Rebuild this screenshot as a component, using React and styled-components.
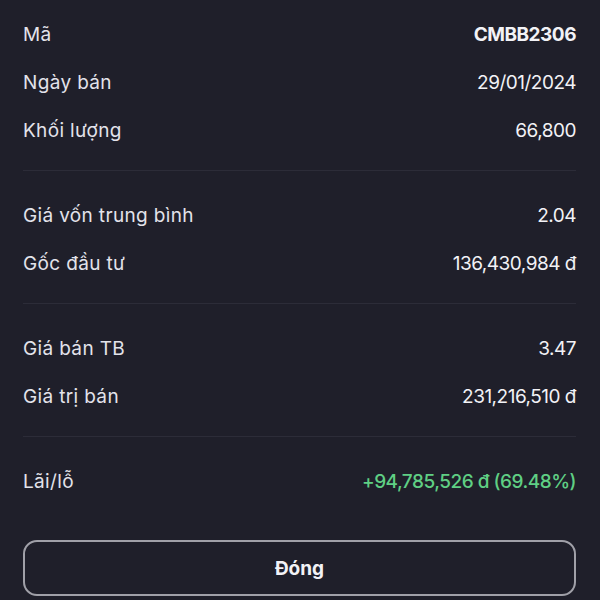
import React from 'react';
import styled, { createGlobalStyle } from 'styled-components';

const GlobalStyle = createGlobalStyle`
    html, body { margin: 0; padding: 0; background: #1f1f2a; }
    body { font-family: Inter, "Noto Sans", sans-serif; }
`;

const Sheet = styled.div`
    width: 600px; height: 600px; box-sizing: border-box; padding: 10px 24px 0 23px; background: #1f1f2a; color: #e6e6ec;
`;

const Section = styled.div`display: flex; flex-direction: column;`;

const Row = styled.div`
    display: flex; justify-content: space-between; align-items: center; height: 48px; font-size: 19px;
`;

const Label = styled.span`color: #e3e3ea; font-weight: 400; letter-spacing: 0.35px;`;

const Value = styled.span`
    color: ${p => p.$green ? '#5fcf84' : '#f2f2f6'}; font-weight: ${p => p.$bold ? 700 : p.$green ? 500 : 400};
    letter-spacing: -0.5px;
`;

const Divider = styled.div`height: 1px; background: #2c2c38; margin: 16px 0 20px;`;

const Button = styled.button`
    display: block; width: 100%; height: 56px; margin-top: 35px; border: 2px solid #a0a0a8; border-radius: 14px;
    background: transparent; color: #f2f2f6; font-family: inherit; font-size: 19px; font-weight: 700; cursor: pointer;
`;

const groups = [
    [
        { label: 'Mã', value: 'CMBB2306', bold: true },
        { label: 'Ngày bán', value: '29/01/2024' },
        { label: 'Khối lượng', value: '66,800' },
    ],
    [
        { label: 'Giá vốn trung bình', value: '2.04' },
        { label: 'Gốc đầu tư', value: '136,430,984 đ' },
    ],
    [
        { label: 'Giá bán TB', value: '3.47' },
        { label: 'Giá trị bán', value: '231,216,510 đ' },
    ],
    [
        { label: 'Lãi/lỗ', value: '+94,785,526 đ (69.48%)', green: true },
    ],
];

const App = () => {
    return (
        <Sheet>
            <GlobalStyle />
            {groups.map((rows, i) => (
                <React.Fragment key={i}>
                    {i > 0 && <Divider />}
                    <Section>
                        {rows.map(r => (
                            <Row key={r.label}>
                                <Label>{r.label}</Label>
                                <Value $bold={r.bold} $green={r.green}>{r.value}</Value>
                            </Row>
                        ))}
                    </Section>
                </React.Fragment>
            ))}
            <Button>Đóng</Button>
        </Sheet>
    );
};

export default App;
